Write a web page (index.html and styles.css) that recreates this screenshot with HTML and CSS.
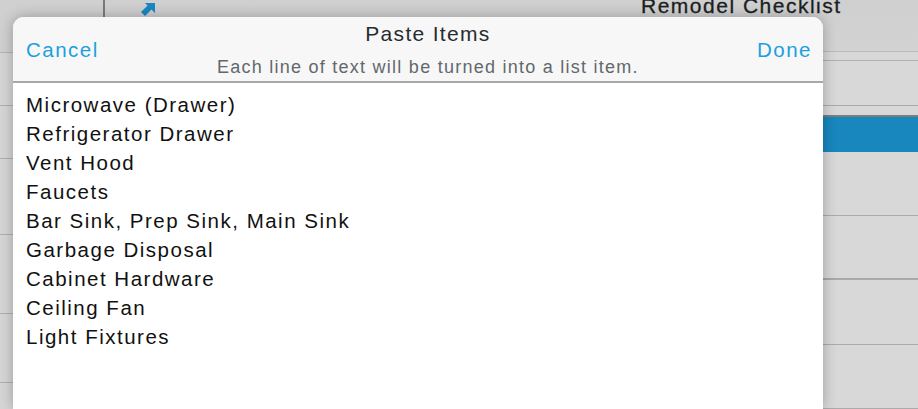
FILE: index.html
```html
<!DOCTYPE html>
<html>
<head>
<meta charset="utf-8">
<link rel="stylesheet" href="styles.css">
</head>
<body>
<div class="app">
  <aside class="sidebar">
    <div class="side-top"></div>
    <div class="side-row r1"></div>
    <div class="side-row r2"></div>
    <div class="side-row r3"></div>
    <div class="side-row r4"></div>
    <div class="side-row r5"></div>
  </aside>
  <main class="main">
    <div class="navbar">
      <svg class="share" width="14" height="13" viewBox="0 0 14 13"><path d="M4 0H14V10L10.5 6.5 4 13 0 9 6.5 2.5Z" fill="#1a86c4"/></svg>
      <div class="nav-title">Remodel Checklist</div>
    </div>
    <div class="row thin"></div>
    <div class="row mid"></div>
    <div class="row thin2"></div>
    <div class="row selected"></div>
    <div class="row tall"></div>
    <div class="row tall dark"></div>
    <div class="row tall"></div>
    <div class="row tall"></div>
  </main>
</div>

<div class="modal">
  <header class="modal-head">
    <button class="btn cancel">Cancel</button>
    <div class="head-center">
      <div class="title">Paste Items</div>
      <div class="subtitle">Each line of text will be turned into a list item.</div>
    </div>
    <button class="btn done">Done</button>
  </header>
  <div class="modal-body">
    <div class="item">Microwave (Drawer)</div>
    <div class="item">Refrigerator Drawer</div>
    <div class="item">Vent Hood</div>
    <div class="item">Faucets</div>
    <div class="item">Bar Sink, Prep Sink, Main Sink</div>
    <div class="item">Garbage Disposal</div>
    <div class="item">Cabinet Hardware</div>
    <div class="item">Ceiling Fan</div>
    <div class="item">Light Fixtures</div>
  </div>
</div>
</body>
</html>
```

FILE: styles.css
```css
* { box-sizing: border-box; }
html, body { margin: 0; padding: 0; }
body {
  width: 918px;
  height: 409px;
  overflow: hidden;
  background: #d7d7d7;
  font-family: "Liberation Sans", Arial, sans-serif;
  position: relative;
}

.app {
  display: flex;
  height: 409px;
  overflow: hidden;
}

.sidebar {
  width: 105px;
  border-right: 2px solid #7a7a7a;
  background: #d6d6d6;
  display: flex;
  flex-direction: column;
}
.side-top { height: 53px; background: #d0d0d0; border-bottom: 1px solid #b4b4b4; }
.side-row { border-bottom: 1px solid #b0b0b0; }
.side-row.r1 { height: 53px; }
.side-row.r2 { height: 53px; }
.side-row.r3 { height: 76px; }
.side-row.r4 { height: 79px; }
.side-row.r5 { height: 69px; }

.main {
  flex: 1;
  display: flex;
  flex-direction: column;
  background: #d8d8d8;
}

.navbar {
  height: 54px;
  background: linear-gradient(#cfcfcf, #d3d3d3);
  border-bottom: 1px solid #bcbcbc;
  display: flex;
  align-items: flex-start;
  padding-left: 36px;
  overflow: hidden;
}
.share { margin-top: 3px; flex: none; }
.nav-title {
  margin-left: 486px;
  margin-top: -6px;
  font-size: 21px;
  line-height: 24px;
  letter-spacing: 1.5px;
  color: #1b1f23;
  -webkit-text-stroke: 0.3px #1b1f23;
  white-space: nowrap;
}

.row { border-bottom: 1px solid #ababab; }
.row.thin { height: 10px; border-bottom-color: #b0b0b0; }
.row.mid { height: 46px; }
.row.thin2 { height: 12px; border-bottom: 2px solid #7d7d7d; }
.row.selected { height: 36px; background: #1787be; border-bottom: none; }
.row.tall { height: 67px; }
.row.dark { border-bottom: 2px solid #a9a9a9; }

.modal {
  position: absolute;
  left: 13px;
  top: 17px;
  width: 810px;
  height: 392px;
  background: #fff;
  border-radius: 11px 11px 0 0;
  box-shadow: 0 0 14px rgba(0, 0, 0, 0.28);
  overflow: hidden;
}

.modal-head {
  height: 66px;
  background: #f7f7f7;
  border-bottom: 2px solid #a8a8a8;
  display: flex;
  align-items: center;
  justify-content: space-between;
  padding: 0 11px 0 13px;
}

.btn {
  font-family: inherit;
  background: none;
  border: none;
  padding: 0;
  font-size: 20.5px;
  letter-spacing: 1.5px;
  color: #1c9fe0;
  margin-top: 1px;
}

.head-center {
  display: flex;
  flex-direction: column;
  align-items: center;
  align-self: stretch;
  padding-top: 5px;
}
.title {
  font-size: 21px;
  letter-spacing: 1.3px;
  color: #262b31;
  line-height: 24px;
}
.subtitle {
  margin-top: 10px;
  font-size: 18px;
  letter-spacing: 1.25px;
  color: #62686e;
  line-height: 22px;
}

.modal-body {
  padding: 7px 13px;
}
.item {
  font-size: 20.5px;
  letter-spacing: 1.5px;
  line-height: 29px;
  color: #111;
}
```
